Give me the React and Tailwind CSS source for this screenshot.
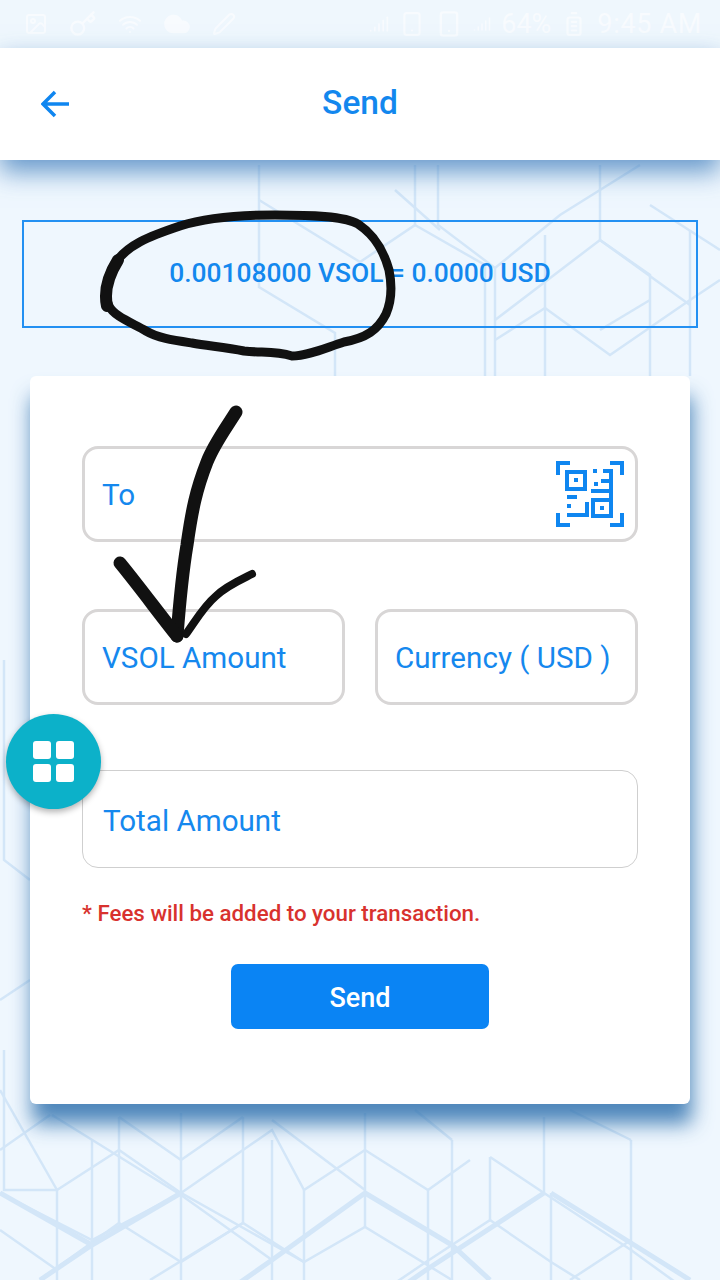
import React from 'react';
import { Image, Key, Wifi, Cloud, Pen, Signal, BatteryFull, Smartphone } from 'lucide-react';

const hexLines = [
    // top right, behind the balance box
    'M259 165 V287 L335 333 V376',
    'M415 165 V225 L360 262 L259 200',
    'M415 225 L485 265 V376',
    'M438 165 V225 L495 268 L560 215 L640 165',
    'M495 268 L495 376',
    'M495 320 L600 240 L690 305',
    'M495 340 L545 308 L610 355 L690 300 L720 280',
    'M545 235 V376',
    'M600 165 V240 L650 275 V376',
    'M650 205 L720 250',
    'M600 330 L650 300',
    'M690 230 V376',
    'M440 230 L395 190',
    // left edge
    'M4 660 V860 L30 880',
    'M0 1000 L30 980',
    'M4 1050 V1190 L57 1190',
    'M0 1090 L57 1190',
    // bottom
    'M0 1150 L50 1115',
    'M52 1115 L181 1195 L272 1260',
    'M92 1140 V1280',
    'M119 1117 V1223',
    'M181 1113 V1280',
    'M243 1117 V1223',
    'M272 1140 V1280',
    'M365 1113 V1227',
    'M452 1140 V1280',
    'M544 1117 V1193',
    'M631 1140 V1280',
    'M551 1193 V1280',
    'M57 1190 V1280',
    'M304 1190 V1280',
    'M428 1190 V1280',
    'M490 1157 V1220 L426 1262 L370 1300',
    'M490 1157 L544 1193 L631 1250 L700 1300',
    'M0 1193 L92 1240 L181 1193 L304 1262',
    'M181 1193 L272 1130 L304 1190',
    'M181 1193 L119 1150 L57 1190',
    'M0 1230 L57 1270',
    'M119 1223 L181 1262 L243 1223 L304 1262 L365 1227 L452 1280',
    'M119 1223 L40 1280',
    'M243 1223 L150 1280',
    'M365 1150 L428 1190 L470 1160',
    'M304 1190 L365 1150',
    'M272 1120 L365 1190',
    'M490 1220 L551 1262 L580 1280',
    'M631 1240 L570 1280',
    'M631 1140 L570 1110',
    'M452 1140 L415 1110',
    'M119 1117 L181 1160 L243 1117',
];

const hexThick = [
    'M181 1193 L92 1245 L40 1280',
    'M365 1193 L272 1260 L215 1300',
    'M365 1193 L452 1245 L490 1280',
    'M544 1193 L426 1270 L390 1295',
    'M0 1193 L92 1245',
    'M551 1193 L631 1243 L690 1280',
];

const Field = ({ label, className = '', children }) => (
    <div className={`h-[96px] flex items-center justify-between pl-[17px] pr-[11px] rounded-[16px] border-[3.5px] border-[#d8d6d6] ${className}`}>
        <span className="pt-[3px] text-[29.6px] text-[#1588ee] whitespace-nowrap">{label}</span>
        {children}
    </div>
);

const QrIcon = () => (
    <svg width="68" height="67" viewBox="0 0 68 67" fill="none" stroke="#0f86f0">
        <path d="M14 2H2V14M54 2H66V14M2 52V64H14M66 52V64H54" strokeWidth="4" />
        <rect x="11" y="11" width="18" height="17" strokeWidth="4" />
        <rect x="18" y="17" width="4" height="4" fill="#0f86f0" stroke="none" />
        <path d="M37 10H41M47 10H57M55 10V38M45 20H53M38 23H42M35 30H53" strokeWidth="4" />
        <rect x="37" y="39" width="18" height="16" strokeWidth="4" />
        <rect x="44" y="45" width="4" height="4" fill="#0f86f0" stroke="none" />
        <path d="M11 36H21M31 41V54M11 54H33M11 45H15" strokeWidth="4" />
    </svg>
);

const Annotations = () => (
    <svg className="absolute inset-0 z-20 pointer-events-none" width="720" height="1280" fill="none" stroke="#111111" strokeLinecap="round" strokeLinejoin="round">
        <path strokeWidth="9" d="M180 226 C212 216 250 215 275 215 C310 215 345 216 358 224 C376 236 384 252 389 270 C392 285 392 300 386 314 C378 330 366 338 344 342 C325 348 308 356 292 356 C275 351 262 353 244 351 C225 347 208 346 192 343 C172 340 158 338 146 331 C130 322 114 316 109 306 C104 296 106 280 114 265 C126 245 150 236 180 226 Z" />
        <path strokeWidth="12" d="M107 306 C104 292 108 276 118 260" />
        <path strokeWidth="13" d="M236 412 C226 428 214 444 207 462 C196 490 192 510 187 545 C182 575 179 610 177 636" />
        <path strokeWidth="13" d="M120 563 C138 585 158 612 177 636" />
        <path strokeWidth="8" d="M186 634 C196 620 204 606 216 596 C226 586 240 580 252 574" />
    </svg>
);

const App = () => {
    return (
        <div className="relative w-[720px] h-[1280px] overflow-hidden bg-[#eff7fe]" style={{ fontFamily: 'Roboto, sans-serif' }}>
            {/* Background pattern */}
            <svg className="absolute inset-0" width="720" height="1280" fill="none" stroke="#d3e6f8">
                {hexLines.map((d) => (
                    <path key={d} d={d} strokeWidth="2.5" />
                ))}
                {hexThick.map((d) => (
                    <path key={d} d={d} strokeWidth="5" />
                ))}
            </svg>

            {/* Status bar */}
            <div className="relative h-12 bg-[#eff7fd] flex items-center justify-between pl-6 pr-[18px] text-[#f8fbfe]">
                <div className="flex items-center gap-[21px]">
                    <Image size={24} />
                    <Key size={28} />
                    <Wifi size={24} />
                    <Cloud size={28} fill="#f8fbfe" />
                    <Pen size={24} />
                </div>
                <div className="flex items-center gap-[10px] text-[27px]">
                    <Signal size={20} />
                    <Smartphone size={26} />
                    <Smartphone size={28} />
                    <Signal size={18} />
                    <span>64%</span>
                    <BatteryFull size={26} className="-rotate-90" />
                    <span className="tracking-wide">9:45 AM</span>
                </div>
            </div>

            {/* Header */}
            <header className="relative z-10 h-28 bg-white flex items-center justify-center shadow-[0_12px_24px_rgba(70,130,190,0.8)]">
                <svg className="absolute left-[41px] top-[42px]" width="30" height="28" viewBox="0 0 30 28" fill="none" stroke="#0f86f0" strokeWidth="3.5">
                    <path d="M14 2 L2 14 L14 26 M2 14 H28" />
                </svg>
                <h1 className="text-[33.5px] font-medium text-[#1387ee] pb-[2px]">Send</h1>
            </header>

            {/* Balance box */}
            <div className="relative mt-[60px] mx-[22px] h-[108px] flex items-center justify-center border-2 border-[#2390f2] text-[26.4px] font-medium text-[#1388ee]">
                0.00108000 VSOL = 0.0000 USD
            </div>

            {/* Form card */}
            <div className="relative z-10 mt-[48px] mx-[30px] h-[728px] px-[52px] pt-[70px] bg-white rounded-[6px] shadow-[2px_20px_20px_rgba(50,115,175,0.85)]">
                <Field label="To">
                    <QrIcon />
                </Field>

                <div className="mt-[67px] grid grid-cols-2 gap-[30px]">
                    <Field label="VSOL Amount" />
                    <Field label="Currency ( USD )" />
                </div>

                <div className="mt-[65px] h-[98px] flex items-center pl-[20px] rounded-[16px] border-[1.5px] border-[#cfcfcf]">
                    <span className="pt-1 text-[29.6px] text-[#1588ee]">Total Amount</span>
                </div>

                <p className="mt-[29px] text-[22.3px] font-medium text-[#d8322e] whitespace-nowrap">* Fees will be added to your transaction.</p>

                <button className="mt-[34px] mx-auto flex items-center justify-center w-[258px] h-[65px] pt-[2px] rounded-[7px] bg-[#0a84f4] text-white text-[27px] font-medium">
                    Send
                </button>
            </div>

            {/* Floating menu button */}
            <div className="absolute z-20 left-[6px] top-[714px] w-[95px] h-[95px] rounded-full bg-[#0cb1c9] shadow-[0_3px_6px_rgba(0,0,0,0.3)] grid grid-cols-[18px_18px] gap-[5px] content-center justify-center">
                <span className="w-[18px] h-[18px] rounded-[3px] bg-white" />
                <span className="w-[18px] h-[18px] rounded-[3px] bg-white" />
                <span className="w-[18px] h-[18px] rounded-[3px] bg-white" />
                <span className="w-[18px] h-[18px] rounded-[3px] bg-white" />
            </div>

            <Annotations />
        </div>
    );
};

export default App;
